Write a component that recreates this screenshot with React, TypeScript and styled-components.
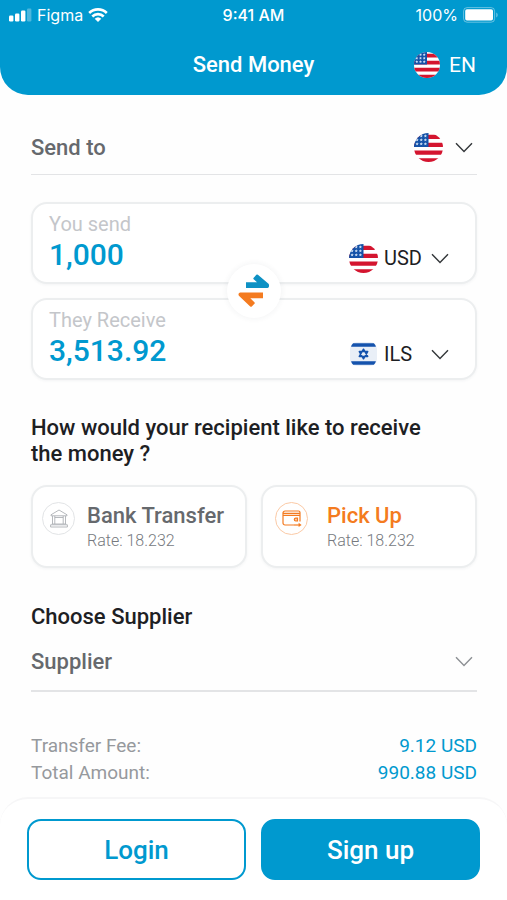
import React, { useState } from "react";
import styled, { createGlobalStyle } from "styled-components";

const blue = "#0099cf";
const orange = "#f47b20";

const GlobalStyle = createGlobalStyle`
  * { box-sizing: border-box; }
  body {
    margin: 0;
    background: #fefefe;
    color: #1d2023;
    font-family: Roboto, "Liberation Sans", sans-serif;
  }
  button, input, select { font: inherit; color: inherit; margin: 0; }
  svg { display: block; flex: none; }
`;

const Page = styled.div`
  display: flex;
  flex-direction: column;
  min-height: 100vh;
`;

const Header = styled.header`
  background: ${blue};
  color: #fff;
  border-radius: 0 0 28px 28px;
  padding-bottom: 12px;
`;

const StatusBar = styled.div`
  display: grid;
  grid-template-columns: 1fr auto 1fr;
  align-items: center;
  height: 29px;
  padding: 0 8px;
  font-family: Inter, sans-serif;
  font-size: 16px;
`;

const StatusGroup = styled.div<{ $end?: boolean }>`
  display: flex;
  align-items: center;
  justify-content: ${(p) => (p.$end ? "flex-end" : "flex-start")};
  gap: 5px;
`;

const Clock = styled.span`
  font-weight: 500;
`;

const TitleBar = styled.div`
  display: grid;
  grid-template-columns: 1fr auto 1fr;
  align-items: center;
  height: 54px;
  padding: 18px 31px 0;
`;

const Title = styled.h1`
  grid-column: 2;
  margin: 0;
  font-size: 22px;
  line-height: 34px;
  font-weight: 500;
`;

const LanguageButton = styled.button`
  justify-self: end;
  display: flex;
  align-items: center;
  gap: 9px;
  padding: 0;
  border: 0;
  background: none;
  font-size: 21px;
  line-height: 30px;
`;

const Main = styled.main`
  display: flex;
  flex-direction: column;
  padding: 25px 30px 8px 31px;
`;

const SelectLine = styled.div`
  display: flex;
  align-items: center;
  height: 55px;
  border-bottom: 1px solid #e3e4e6;
`;

const SupplierLine = styled(SelectLine)`
  height: 59px;
  margin-top: 3px;
  border-bottom-width: 2px;
`;

const LineSelect = styled.select`
  flex: 1;
  min-width: 0;
  height: 52px;
  padding: 0 68px 0 0;
  margin-right: -64px;
  border: 0;
  background: transparent;
  appearance: none;
  color: #66696d;
  font-size: 22px;
  font-weight: 500;
`;

const Marks = styled.span`
  display: flex;
  align-items: center;
  justify-content: flex-end;
  gap: 12px;
  width: 64px;
  padding-right: 4px;
  pointer-events: none;
`;

const Exchange = styled.section`
  position: relative;
  display: grid;
  gap: 14px;
  margin-top: 27px;
`;

const AmountCard = styled.div`
  display: flex;
  justify-content: space-between;
  align-items: flex-end;
  height: 82px;
  padding: 8px 26px 8px 16px;
  border: 2px solid #eceeef;
  border-radius: 16px;
  background: #fff;
  box-shadow: 0 1px 3px rgba(40, 60, 70, 0.05);
`;

const AmountField = styled.label`
  display: flex;
  flex-direction: column;
  align-self: flex-start;
  flex: 1;
  min-width: 0;
  color: #c4c6ca;
  font-size: 20px;
  line-height: 24px;
`;

const AmountInput = styled.input`
  width: 160px;
  height: 36px;
  padding: 0;
  border: 0;
  background: none;
  color: ${blue};
  font-size: 30px;
  font-weight: 500;
`;

const Currency = styled.div`
  display: flex;
  align-items: center;
  height: 32px;
`;

const FlagSlot = styled.span`
  display: flex;
  justify-content: center;
  width: 30px;
  margin-right: 6px;
`;

const CurrencySelect = styled.select`
  width: 65px;
  height: 30px;
  padding: 0 18px 0 0;
  margin-right: -18px;
  border: 0;
  background: transparent;
  appearance: none;
  font-size: 20px;
`;

const ChevronMark = styled.span`
  pointer-events: none;
`;

const SwapButton = styled.button`
  position: absolute;
  top: 50%;
  left: 50%;
  display: grid;
  place-items: center;
  width: 54px;
  height: 54px;
  padding: 0;
  border: 0;
  border-radius: 50%;
  background: #fff;
  box-shadow: 0 0 6px rgba(40, 60, 70, 0.07);
  transform: translate(-50%, -50%);
`;

const Heading = styled.h2`
  margin: 0;
  font-size: 22px;
  line-height: 26px;
  font-weight: 500;
`;

const Question = styled(Heading)`
  max-width: 400px;
  margin-top: 35px;
`;

const Methods = styled.div`
  display: grid;
  grid-template-columns: 1fr 1fr;
  gap: 14px;
  margin: 18px 0 36px;
`;

const MethodCard = styled.label<{ $wide?: boolean }>`
  position: relative;
  display: flex;
  gap: ${(p) => (p.$wide ? "19px" : "12px")};
  height: 83px;
  padding: 15px 0 0 ${(p) => (p.$wide ? "12px" : "9px")};
  border: 2px solid #eceeef;
  border-radius: 16px;
  background: #fff;
  box-shadow: 0 1px 3px rgba(40, 60, 70, 0.05);
`;

const MethodRadio = styled.input`
  position: absolute;
  inset: 0;
  width: 100%;
  height: 100%;
  margin: 0;
  opacity: 0;
`;

const MethodIcon = styled.span<{ $active: boolean }>`
  display: grid;
  place-items: center;
  flex: none;
  width: 33px;
  height: 33px;
  border: 1px solid ${(p) => (p.$active ? "#fbcaa6" : "#e2e4e6")};
  border-radius: 50%;
  color: ${(p) => (p.$active ? orange : "#aeb1b5")};
`;

const MethodText = styled.span`
  display: flex;
  flex-direction: column;
`;

const MethodName = styled.span<{ $active: boolean }>`
  color: ${(p) => (p.$active ? orange : "#66696d")};
  font-size: 22px;
  line-height: 27px;
  font-weight: 500;
  white-space: nowrap;
`;

const MethodRate = styled.span`
  color: #76797e;
  font-size: 16px;
  line-height: 24px;
  font-weight: 300;
`;

const Totals = styled.dl`
  display: grid;
  grid-template-columns: auto auto;
  justify-content: space-between;
  margin: 40px 0 0;
  font-size: 19px;
  line-height: 27px;
`;

const TotalLabel = styled.dt`
  color: #96999d;
`;

const TotalValue = styled.dd`
  margin: 0;
  color: ${blue};
  text-align: right;
`;

const Footer = styled.footer`
  display: grid;
  grid-template-columns: 1fr 1fr;
  gap: 15px;
  margin-top: auto;
  padding: 20px 27px;
  border-top: 2px solid #f6f6f7;
  border-radius: 28px 28px 0 0;
  background: #fff;
`;

const ActionButton = styled.button<{ $filled?: boolean }>`
  height: 61px;
  border: 2px solid ${blue};
  border-radius: 14px;
  background: ${(p) => (p.$filled ? blue : "#fff")};
  color: ${(p) => (p.$filled ? "#fff" : blue)};
  font-size: 26px;
  font-weight: 500;
`;

function Chevron({ color = "#34373a" }: { color?: string }) {
  return (
    <svg width="18" height="11" viewBox="0 0 18 11" fill="none" stroke={color} strokeWidth="1.4" aria-hidden>
      <path d="M1 1.2 9 9.4l8-8.2" />
    </svg>
  );
}

function UsFlag({ size = 29, id }: { size?: number; id: string }) {
  return (
    <svg width={size} height={size} viewBox="0 0 28 28" aria-hidden>
      <clipPath id={id}>
        <circle cx="14" cy="14" r="14" />
      </clipPath>
      <g clipPath={`url(#${id})`}>
        <path fill="#fff" d="M0 0h28v28H0z" />
        <path fill="#d4152f" d="M0 1.8h28v4H0zM0 9.4h28v4H0zM0 17h28v4H0zM0 24.4h28V28H0z" />
        <path fill="#1452a8" d="M0 0h14v13.4H0z" />
        <g fill="#c9dcf2">
          {[2.6, 6.4, 10.2].map((y) =>
            [3, 7, 11].map((x) => (
              <path key={`${x}-${y}`} d={`M${x} ${y - 1.3}l.5.9 1 .2-.7.8.1 1-.9-.4-.9.4.1-1-.7-.8 1-.2z`} />
            ))
          )}
        </g>
      </g>
    </svg>
  );
}

function IsraelFlag() {
  return (
    <svg width="27" height="24" viewBox="0 0 27 24" aria-hidden>
      <rect width="27" height="24" rx="7" fill="#e9eff7" />
      <path
        fill="#1553ad"
        d="M3.2 1.3h20.6c1 .8 1.7 1.8 2.1 3.4H1.1c.4-1.6 1.1-2.6 2.1-3.4zM1.1 19.3h24.8c-.4 1.6-1.1 2.6-2.1 3.4H3.2c-1-.8-1.7-1.8-2.1-3.4z"
      />
      <path
        fill="none"
        stroke="#1553ad"
        strokeWidth="1.5"
        strokeLinejoin="round"
        d="M13.5 7.2l4.2 7.2H9.3zM13.5 16.8l-4.2-7.2h8.4z"
      />
    </svg>
  );
}

function SwapIcon() {
  return (
    <svg width="32" height="34" viewBox="0 0 32 34" aria-hidden>
      <path
        fill="#0e91c4"
        d="M8 8.2h11l-3.3-2.900a1 1 0 0 1 0-1.500L18.300.8a1.200 1.200 0 0 1 1.600 0l10.600 9c1.100 1 .5 4.200-1 4.200H8z"
      />
      <path
        fill={orange}
        d="M25 18.600H2.200C.8 18.600-.1 20.700.9 21.700l11.300 10.700a1.200 1.200 0 0 0 1.600 0l2.600-2.600a1 1 0 0 0 0-1.500L12.300 24.200H25z"
      />
    </svg>
  );
}

function SignalIcon() {
  return (
    <svg width="24" height="15" viewBox="0 0 24 15" fill="#fff" aria-hidden>
      <rect x="1" y="8.5" width="4.4" height="6" rx="1.2" />
      <rect x="7" y="6.5" width="4.4" height="8" rx="1.2" />
      <rect x="13" y="3.5" width="4.4" height="11" rx="1.2" />
      <rect x="19" y="1.5" width="4.4" height="13" rx="1.2" opacity=".3" />
    </svg>
  );
}

function WifiIcon() {
  return (
    <svg width="20" height="14" viewBox="0 0 20 14" aria-hidden>
      <g fill="none" stroke="#fff" strokeWidth="2.6">
        <path d="M1.2 5a12.6 12.6 0 0 1 17.6 0" />
        <path d="M4.3 8.5a8 8 0 0 1 11.4 0" />
      </g>
      <path fill="#fff" d="M6.7 10.7a4.8 4.8 0 0 1 6.6 0L10 14z" />
    </svg>
  );
}

function BatteryIcon() {
  return (
    <svg width="36" height="16" viewBox="0 0 36 16" aria-hidden>
      <rect x=".6" y=".6" width="31" height="14.6" rx="3.5" fill="none" stroke="#fff" strokeOpacity=".4" />
      <rect x="2.2" y="2.2" width="27.8" height="11.4" rx="1.8" fill="#fff" />
      <path d="M33.2 5.4c2 .7 2 4.3 0 5z" fill="#fff" opacity=".4" />
    </svg>
  );
}

function BankIcon() {
  return (
    <svg width="18" height="19" viewBox="0 0 18 19" fill="none" stroke="currentColor" strokeWidth="0.9" aria-hidden>
      <path d="M1 5.8 9 1l8 4.8v1H1zM2.5 7v8M4.8 7v8M13.2 7v8M15.5 7v8M4.8 8.5h8.4M1.8 15h14.4M.6 15.8h16.8V18H.6z" />
    </svg>
  );
}

function WalletIcon() {
  return (
    <svg width="20" height="17" viewBox="0 0 20 17" fill="none" stroke="currentColor" strokeWidth="1.2" aria-hidden>
      <path d="M12 15H3a2 2 0 0 1-2-2V3a2 2 0 0 1 2-2h13.500A1.500 1.500 0 0 1 18 2.500V11.500M1.200 3.400h16.600M1.200 5.400h16.600" />
      <path fill="currentColor" fillOpacity=".4" d="M15.500 8.200h-1.800a1.400 1.400 0 0 0 0 2.800h1.800z" />
      <path d="M12 15h6" />
      <path fill="currentColor" stroke="none" d="M16.600 12.800 19.600 15l-3 2z" />
    </svg>
  );
}

const methods = [
  { id: "bank", name: "Bank Transfer", Icon: BankIcon },
  { id: "pickup", name: "Pick Up", Icon: WalletIcon },
];

const totals = [
  { label: "Transfer Fee:", value: "9.12 USD" },
  { label: "Total Amount:", value: "990.88 USD" },
];

export default function App() {
  const [method, setMethod] = useState("pickup");

  return (
    <Page>
      <GlobalStyle />
      <Header>
        <StatusBar>
          <StatusGroup>
            <SignalIcon />
            <span>Figma</span>
            <WifiIcon />
          </StatusGroup>
          <Clock>9:41 AM</Clock>
          <StatusGroup $end>
            <span>100%</span>
            <BatteryIcon />
          </StatusGroup>
        </StatusBar>
        <TitleBar>
          <Title>Send Money</Title>
          <LanguageButton type="button">
            <UsFlag size={26} id="flag-language" />
            EN
          </LanguageButton>
        </TitleBar>
      </Header>

      <Main>
        <SelectLine>
          <LineSelect aria-label="Send to">
            <option>Send to</option>
          </LineSelect>
          <Marks>
            <UsFlag id="flag-country" />
            <Chevron />
          </Marks>
        </SelectLine>

        <Exchange>
          <AmountCard>
            <AmountField>
              You send
              <AmountInput type="text" inputMode="decimal" defaultValue="1,000" />
            </AmountField>
            <Currency>
              <FlagSlot>
                <UsFlag id="flag-currency" />
              </FlagSlot>
              <CurrencySelect aria-label="Currency you send">
                <option>USD</option>
              </CurrencySelect>
              <ChevronMark>
                <Chevron />
              </ChevronMark>
            </Currency>
          </AmountCard>
          <AmountCard>
            <AmountField>
              They Receive
              <AmountInput type="text" inputMode="decimal" defaultValue="3,513.92" />
            </AmountField>
            <Currency>
              <FlagSlot>
                <IsraelFlag />
              </FlagSlot>
              <CurrencySelect aria-label="Currency they receive">
                <option>ILS</option>
              </CurrencySelect>
              <ChevronMark>
                <Chevron />
              </ChevronMark>
            </Currency>
          </AmountCard>
          <SwapButton type="button" aria-label="Swap currencies">
            <SwapIcon />
          </SwapButton>
        </Exchange>

        <Question id="method-question">How would your recipient like to receive the money ?</Question>
        <Methods role="radiogroup" aria-labelledby="method-question">
          {methods.map(({ id, name, Icon }) => (
            <MethodCard key={id} $wide={id === "pickup"}>
              <MethodRadio
                type="radio"
                name="method"
                value={id}
                checked={method === id}
                onChange={() => setMethod(id)}
              />
              <MethodIcon $active={method === id}>
                <Icon />
              </MethodIcon>
              <MethodText>
                <MethodName $active={method === id}>{name}</MethodName>
                <MethodRate>Rate: 18.232</MethodRate>
              </MethodText>
            </MethodCard>
          ))}
        </Methods>

        <Heading id="supplier-heading">Choose Supplier</Heading>
        <SupplierLine>
          <LineSelect aria-labelledby="supplier-heading">
            <option>Supplier</option>
          </LineSelect>
          <Marks>
            <Chevron color="#8d9094" />
          </Marks>
        </SupplierLine>

        <Totals>
          {totals.map(({ label, value }) => (
            <React.Fragment key={label}>
              <TotalLabel>{label}</TotalLabel>
              <TotalValue>{value}</TotalValue>
            </React.Fragment>
          ))}
        </Totals>
      </Main>

      <Footer>
        <ActionButton type="button">Login</ActionButton>
        <ActionButton type="button" $filled>
          Sign up
        </ActionButton>
      </Footer>
    </Page>
  );
}
